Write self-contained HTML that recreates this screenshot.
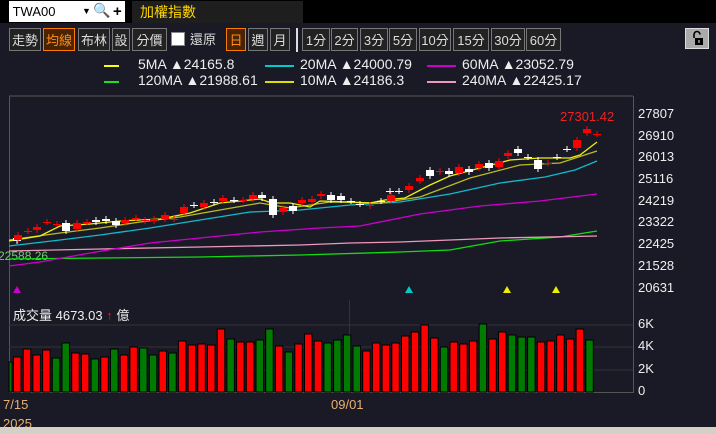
<!DOCTYPE html>
<html><head><meta charset="utf-8"><style>
body{margin:0;width:716px;height:434px;background:#1a1a26;overflow:hidden;position:relative;font-family:"Liberation Sans","Noto Sans CJK TC",sans-serif;color:#fff}
.top{position:absolute;left:0;top:0;width:716px;height:23px;background:#000}
.inp{position:absolute;left:9px;top:1px;width:116px;height:21px;background:#fff;color:#000;font-size:13px;line-height:21px}
.name{position:absolute;left:132px;top:1px;width:171px;height:22px;background:#1e1e1e;color:#ffd400;font-size:14px;line-height:22px;padding-left:8px;box-sizing:border-box}
.b{position:absolute;top:28px;height:23px;border:1px solid #777;background:#222;color:#ddd;font-size:13px;line-height:23px;text-align:center;box-sizing:border-box}
.o{border-color:#ff7a00;color:#ff8c1a;background:#4a2400}
.lg{position:absolute;font-size:14px;color:#eee}
.ln{position:absolute;height:1px}
.ax{position:absolute;left:638px;font-size:13px;color:#eee}
</style></head><body>
<div class="top"></div>
<div class="inp">&nbsp;TWA00<span style="position:absolute;left:73px;font-size:9px">▼</span><span style="position:absolute;left:84px;top:-1px;font-size:14px">🔍</span><span style="position:absolute;left:104px;font-weight:bold;font-size:15px">+</span></div>
<div class="name">加權指數</div>
<div class="b" style="left:9px;width:32px">走勢</div>
<div class="b o" style="left:43px;width:32px">均線</div>
<div class="b" style="left:78px;width:32px">布林</div>
<div class="b" style="left:112px;width:18px">設</div>
<div class="b" style="left:132px;width:35px">分價</div>
<div style="position:absolute;left:171px;top:32px;width:12px;height:12px;background:#fff;border:1px solid #888"></div>
<div style="position:absolute;left:190px;top:28px;font-size:13px;line-height:23px;color:#ddd">還原</div>
<div class="b o" style="left:226px;width:20px">日</div>
<div class="b" style="left:248px;width:20px">週</div>
<div class="b" style="left:270px;width:20px">月</div>
<div style="position:absolute;left:296px;top:28px;width:2px;height:24px;background:#ddd"></div>
<div class="b" style="left:302px;width:28px">1分</div>
<div class="b" style="left:331px;width:27px">2分</div>
<div class="b" style="left:360px;width:28px">3分</div>
<div class="b" style="left:389px;width:28px">5分</div>
<div class="b" style="left:419px;width:32px">10分</div>
<div class="b" style="left:453px;width:36px">15分</div>
<div class="b" style="left:491px;width:34px">30分</div>
<div class="b" style="left:526px;width:35px">60分</div>
<div style="position:absolute;left:685px;top:28px;width:24px;height:21px;background:#aaa;border:1px solid #ddd;box-sizing:border-box">
<svg width="22" height="19" style="position:absolute;left:0;top:0"><path d="M8 9V5.5a3 3 0 0 1 6 0" fill="none" stroke="#000" stroke-width="1.6"/><rect x="9" y="9" width="8" height="7" fill="#000"/><rect x="12.3" y="11" width="1.4" height="3" fill="#aaa"/></svg></div>

<div class="ln" style="left:104px;top:65px;width:15px;height:2px;background:#ff0"></div><div class="lg" style="left:138px;top:56px">5MA ▲24165.8</div>
<div class="ln" style="left:265px;top:65px;width:29px;height:2px;background:#0cc"></div><div class="lg" style="left:300px;top:56px">20MA ▲24000.79</div>
<div class="ln" style="left:427px;top:65px;width:29px;height:2px;background:#c0c"></div><div class="lg" style="left:462px;top:56px">60MA ▲23052.79</div>
<div class="ln" style="left:104px;top:81px;width:15px;height:2px;background:#2d2"></div><div class="lg" style="left:138px;top:72px">120MA ▲21988.61</div>
<div class="ln" style="left:265px;top:81px;width:29px;height:2px;background:#dd0"></div><div class="lg" style="left:300px;top:72px">10MA ▲24186.3</div>
<div class="ln" style="left:427px;top:81px;width:29px;height:2px;background:#e9b"></div><div class="lg" style="left:462px;top:72px">240MA ▲22425.17</div>

<div class="ax" style="top:106px">27807</div><div class="ax" style="top:128px">26910</div><div class="ax" style="top:149px">26013</div><div class="ax" style="top:171px">25116</div><div class="ax" style="top:193px">24219</div><div class="ax" style="top:214px">23322</div><div class="ax" style="top:236px">22425</div><div class="ax" style="top:258px">21528</div><div class="ax" style="top:280px">20631</div>
<div class="ax" style="top:316px">6K</div><div class="ax" style="top:338px">4K</div><div class="ax" style="top:361px">2K</div><div class="ax" style="top:383px">0</div>

<svg id="s" width="716" height="434" style="position:absolute;left:0;top:0">
<line x1="9" y1="96" x2="633" y2="96" stroke="#555"/>
<line x1="9.5" y1="96" x2="9.5" y2="393" stroke="#555"/>
<line x1="633.5" y1="96" x2="633.5" y2="393" stroke="#555"/>
<line x1="349.5" y1="300" x2="349.5" y2="393" stroke="#333"/>
<line x1="9" y1="325" x2="633" y2="325" stroke="#333"/>
<line x1="9" y1="347" x2="633" y2="347" stroke="#333"/>
<line x1="9" y1="370" x2="633" y2="370" stroke="#333"/>
<line x1="9" y1="392.5" x2="633" y2="392.5" stroke="#555"/>
<text x="-2" y="260" fill="#7c7" font-size="12" font-family="Liberation Sans">22588.26</text>
<text x="560" y="121" fill="#e22" font-size="13" font-family="Liberation Sans">27301.42</text>
<polygon points="13,293 17,286 21,293" fill="#c0c"/>
<polygon points="405,293 409,286 413,293" fill="#0cc"/>
<polygon points="503,293 507,286 511,293" fill="#ee0"/>
<polygon points="552,293 556,286 560,293" fill="#ee0"/>
<text x="13" y="320" fill="#eee" font-size="13" font-family="Liberation Sans,Noto Sans CJK TC">成交量 4673.03 <tspan fill="#c22">↑</tspan> 億</text>
<text x="3" y="409" fill="#e8b070" font-size="13" font-family="Liberation Sans">7/15</text>
<text x="331" y="409" fill="#e8b070" font-size="13" font-family="Liberation Sans">09/01</text>
<text x="3" y="428" fill="#e8b070" font-size="13" font-family="Liberation Sans">2025</text>
<rect x="0" y="427" width="716" height="7" fill="#d4d0c8"/>
</svg>
<script>
var s=document.getElementById('s'),NS='http://www.w3.org/2000/svg';
function el(t,a){var e=document.createElementNS(NS,t);for(var k in a)e.setAttribute(k,a[k]);s.appendChild(e);return e;}
function pl(p,c){el('polyline',{points:p,fill:'none',stroke:c,'stroke-width':1.3});}
pl('9,259 100,258 200,257 300,255 400,252 450,250 500,241 560,237 597,231','#1d1');
pl('9,251 100,249 200,247 300,245 350,243 400,242 500,238 597,236','#e9b');
pl('9,266 40,262 90,253 150,243 200,238 260,232 320,228 360,226 420,214 480,206 540,201 597,194','#c0c');
pl('9,246 60,240 100,235 150,228 200,220 250,212 300,210 350,205 400,202 450,194 500,183 545,177 575,170 597,161','#1bc');
pl('9,240 60,233 100,228 140,222 180,217 220,210 260,203 290,208 330,202 380,203 420,197 470,178 520,165 560,163 597,151','#bb2');
pl('9,241 40,236 60,226 90,224 120,221 160,219 190,213 220,203 260,199 272,203 290,203 310,207 320,201 350,202 370,203 385,200 405,198 430,185 450,176 480,168 510,160 540,158 570,158 580,155 597,142','#ee1');
var C=[[17,238,241,'w'],[18,235,240,'r'],[28,231,231,'r'],[37,227,230,'r'],[47,222,222,'r'],[57,224,224,'r'],[66,223,231,'w'],[77,223,229,'r'],[87,222,222,'r'],[96,220,222,'w'],[106,219,221,'w'],[116,221,225,'w'],[125,220,223,'r'],[136,218,218,'r'],[145,220,221,'r'],[154,219,221,'r'],[165,215,219,'r'],[174,219,219,'r'],[184,207,213,'r'],[194,205,205,'w'],[204,203,207,'r'],[214,202,202,'w'],[223,198,201,'r'],[234,200,200,'w'],[243,200,200,'r'],[253,195,199,'r'],[262,195,198,'w'],[273,199,215,'w'],[283,208,212,'r'],[293,206,211,'w'],[302,200,203,'r'],[312,199,202,'r'],[321,194,196,'r'],[331,195,200,'w'],[341,196,200,'w'],[351,201,201,'w'],[360,204,204,'w'],[370,205,206,'r'],[381,201,201,'w'],[390,191,191,'w'],[391,195,201,'r'],[399,191,191,'w'],[409,186,190,'r'],[420,178,181,'r'],[430,170,176,'w'],[440,171,172,'r'],[449,171,174,'w'],[459,167,173,'r'],[469,169,172,'w'],[479,164,168,'r'],[489,163,168,'w'],[499,161,167,'r'],[508,153,156,'r'],[518,149,153,'w'],[528,157,157,'w'],[538,160,169,'w'],[548,163,163,'r'],[557,157,157,'w'],[567,149,149,'w'],[577,140,148,'r'],[587,129,133,'r'],[597,134,134,'r']];
C.forEach(function(c){var col=c[3]=='r'?'#f00':'#fff';
el('line',{x1:c[0],x2:c[0],y1:c[1]-3,y2:c[2]+3,stroke:col});
if(c[2]-c[1]<1)el('line',{x1:c[0]-4,x2:c[0]+4,y1:c[1]+.5,y2:c[1]+.5,stroke:col});
else el('rect',{x:c[0]-4,y:c[1],width:8,height:c[2]-c[1],fill:col});});
var V=[[357,'r'],[349,'r'],[355,'r'],[350,'r'],[358,'g'],[343,'g'],[353,'r'],[354,'r'],[359,'g'],[357,'r'],[349,'g'],[355,'r'],[347,'r'],[348,'g'],[355,'g'],[351,'r'],[353,'g'],[341,'r'],[345,'r'],[344,'r'],[345,'r'],[329,'r'],[339,'g'],[342,'r'],[342,'r'],[340,'g'],[329,'g'],[346,'r'],[352,'g'],[344,'r'],[334,'r'],[341,'r'],[343,'g'],[340,'g'],[335,'g'],[346,'g'],[351,'r'],[343,'r'],[345,'r'],[343,'r'],[336,'r'],[332,'r'],[325,'r'],[338,'r'],[347,'g'],[342,'r'],[344,'r'],[341,'r'],[324,'g'],[339,'r'],[332,'r'],[335,'g'],[337,'g'],[337,'g'],[342,'r'],[341,'r'],[335,'r'],[339,'r'],[329,'r'],[340,'g']];
el('rect',{x:9,y:362,width:3,height:30,fill:'#070',stroke:'#000'});
V.forEach(function(v,i){var x=17+i*9.7;el('rect',{x:x-3.5,y:v[0],width:7.5,height:392-v[0],fill:v[1]=='r'?'#f00':'#007a00',stroke:'#000','stroke-width':1});});
</script>
</body></html>
